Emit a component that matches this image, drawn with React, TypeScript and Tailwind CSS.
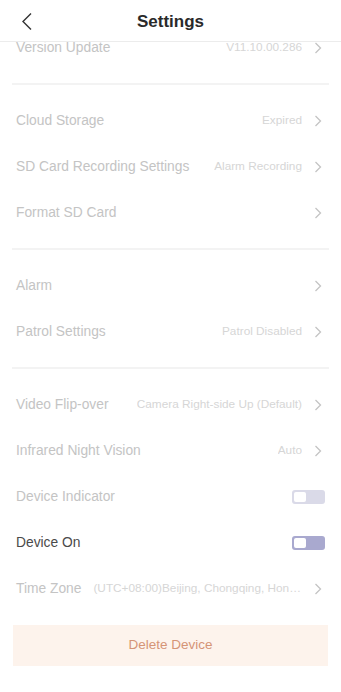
import React from "react";

const font = { fontFamily: '"Helvetica Neue", "Liberation Sans", Arial, sans-serif' };

function Chevron() {
  return (
    <svg width="8" height="12" viewBox="0 0 8 12" className="shrink-0">
      <path d="M1.5 1 L6.5 6 L1.5 11" fill="none" stroke="#c4c4c4" strokeWidth="1.3" />
    </svg>
  );
}

function Row({ label, value, dark, toggle, dim }: { label: string; value?: string; dark?: boolean; toggle?: "off" | "on"; dim?: boolean }) {
  return (
    <div className="flex h-[46px] items-center pl-4 pr-[19px]">
      <span className={`shrink-0 text-[13.8px] ${dark ? "text-[#4a4a4a]" : "text-[#c4c4c4]"}`}>{label}</span>
      <div className="flex min-w-0 flex-1 items-center justify-end gap-[12px] pl-3">
        {value && <span className="truncate text-[11.8px] text-[#d6d6d6]">{value}</span>}
        {toggle ? (
          <div className={`-mr-[3px] flex h-[14px] w-[33px] items-center rounded-[3px] p-[2px] ${toggle === "on" ? "bg-[#a9a9cf]" : "bg-[#dadae8]"}`}>
            <div className="h-[10px] w-[12px] rounded-[2px] bg-white" />
          </div>
        ) : (
          !dim && <Chevron />
        )}
      </div>
    </div>
  );
}

function Divider() {
  return (
    <>
      <div className="h-[12px]" />
      <div className="mx-3 h-[2px] bg-[#f3f3f3]" />
      <div className="h-[13px]" />
    </>
  );
}

export default function App() {
  return (
    <div className="relative h-[692px] w-[341px] overflow-hidden bg-white" style={font}>
      <div className="relative z-10 flex h-[42px] items-center justify-center border-b border-[#ececec] bg-white pt-[2px]">
        <svg width="12" height="20" viewBox="0 0 12 20" className="absolute left-[21px] top-[12px]">
          <path d="M10 1.5 L2 9.5 L10 17.5" fill="none" stroke="#333" strokeWidth="1.4" />
        </svg>
        <span className="text-[17px] font-semibold text-[#2a2a2a]">Settings</span>
      </div>
      <div className="-mt-[17px]">
        <Row label="Version Update" value="V11.10.00.286" />
        <Divider />
        <Row label="Cloud Storage" value="Expired" />
        <Row label="SD Card Recording Settings" value="Alarm Recording" />
        <Row label="Format SD Card" />
        <Divider />
        <Row label="Alarm" />
        <Row label="Patrol Settings" value="Patrol Disabled" />
        <Divider />
        <Row label="Video Flip-over" value="Camera Right-side Up (Default)" />
        <Row label="Infrared Night Vision" value="Auto" />
        <Row label="Device Indicator" toggle="off" />
        <Row label="Device On" dark toggle="on" />
        <Row label="Time Zone" value="(UTC+08:00)Beijing, Chongqing, Hong Kong, Urumqi" />
        <div className="mx-[13px] mt-[13px] flex h-[41px] items-center justify-center bg-[#fdf3ec]">
          <span className="text-[13.5px] text-[#d59476]">Delete Device</span>
        </div>
      </div>
    </div>
  );
}
